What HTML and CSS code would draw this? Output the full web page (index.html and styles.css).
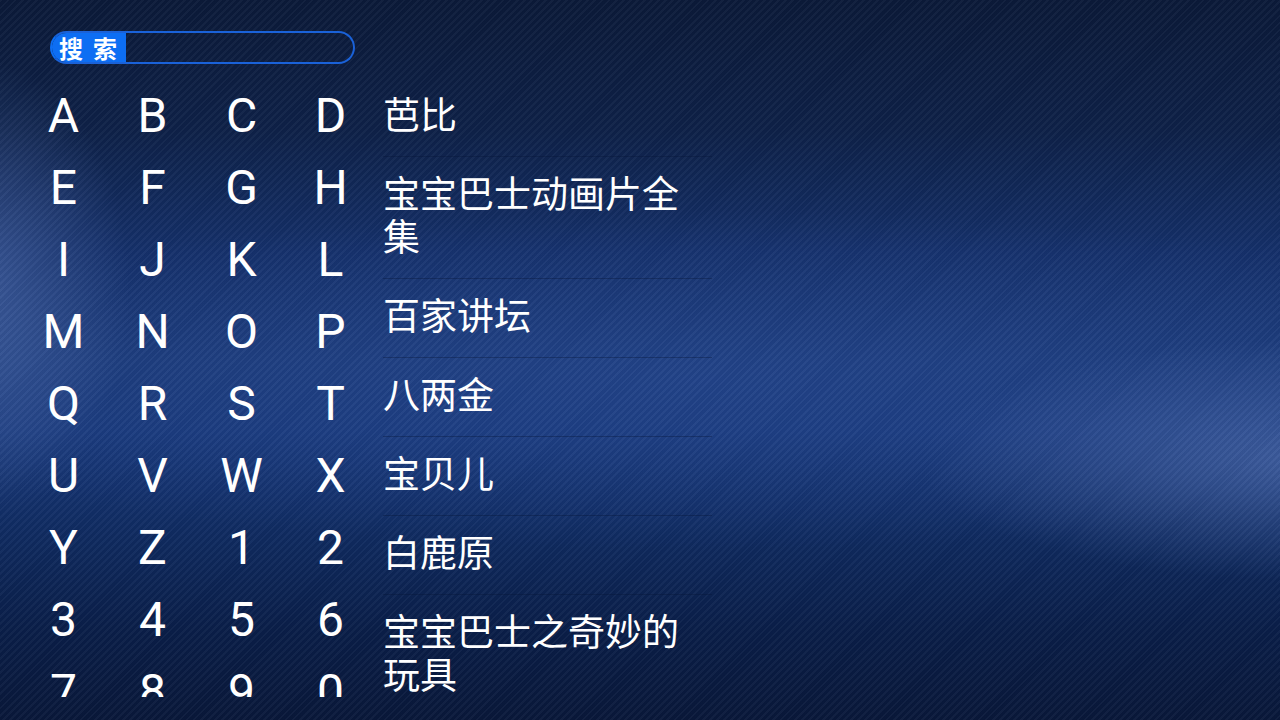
FILE: index.html
```html
<!DOCTYPE html>
<html lang="zh-CN">
<head>
<meta charset="utf-8">
<title>搜索</title>
<link rel="stylesheet" href="styles.css">
</head>
<body>
<div class="screen">
  <div class="search">
    <span class="search-label"><span>搜</span><span>索</span></span>
    <span class="search-field"></span>
  </div>
  <div class="main">
    <div class="keyboard">
      <span class="key">A</span><span class="key">B</span><span class="key">C</span><span class="key">D</span>
      <span class="key">E</span><span class="key">F</span><span class="key">G</span><span class="key">H</span>
      <span class="key">I</span><span class="key">J</span><span class="key">K</span><span class="key">L</span>
      <span class="key">M</span><span class="key">N</span><span class="key">O</span><span class="key">P</span>
      <span class="key">Q</span><span class="key">R</span><span class="key">S</span><span class="key">T</span>
      <span class="key">U</span><span class="key">V</span><span class="key">W</span><span class="key">X</span>
      <span class="key">Y</span><span class="key">Z</span><span class="key">1</span><span class="key">2</span>
      <span class="key">3</span><span class="key">4</span><span class="key">5</span><span class="key">6</span>
      <span class="key">7</span><span class="key">8</span><span class="key">9</span><span class="key">0</span>
    </div>
    <ul class="results">
      <li class="result">芭比</li>
      <li class="result">宝宝巴士动画片全集</li>
      <li class="result">百家讲坛</li>
      <li class="result">八两金</li>
      <li class="result">宝贝儿</li>
      <li class="result">白鹿原</li>
      <li class="result">宝宝巴士之奇妙的玩具</li>
    </ul>
  </div>
</div>
</body>
</html>
```

FILE: styles.css
```css
html, body {
  margin: 0;
  padding: 0;
}

body {
  width: 1280px;
  height: 720px;
  overflow: hidden;
  background: #0b1a38;
}

.screen {
  width: 1280px;
  height: 720px;
  box-sizing: border-box;
  padding-top: 31px;
  color: #ffffff;
  font-family: Roboto, "Noto Sans CJK SC", sans-serif;
  background:
    repeating-linear-gradient(135deg, rgba(255,255,255,0.035) 0px, rgba(255,255,255,0.035) 2px, rgba(0,0,0,0.03) 2px, rgba(0,0,0,0.03) 5px),
    radial-gradient(ellipse 380px 120px at 1300px 460px, rgba(80,110,175,0.65), rgba(80,110,175,0) 100%),
    radial-gradient(ellipse 150px 230px at -20px 290px, rgba(80,110,175,0.6), rgba(80,110,175,0) 100%),
    radial-gradient(ellipse 900px 170px at 700px 380px, rgba(40,75,150,0.5), rgba(40,75,150,0) 100%),
    linear-gradient(180deg, #0b1a39 0%, #0e2148 18%, #15306a 35%, #1c3b7a 50%, #19397b 60%, #0f2a5f 75%, #0a1e48 88%, #09183a 100%);
}

.search {
  display: flex;
  align-items: stretch;
  width: 305px;
  height: 33px;
  margin-left: 50px;
  box-sizing: border-box;
  border: 2px solid #1a62d9;
  border-left-color: #0d6ef3;
  border-radius: 17px;
  overflow: hidden;
}

.search-label {
  display: flex;
  align-items: center;
  gap: 10px;
  width: 74px;
  flex: none;
  box-sizing: border-box;
  padding-left: 7px;
  background: #0d6ef3;
  font-family: "Noto Sans CJK SC", sans-serif;
  font-weight: 700;
  font-size: 24px;
  line-height: 29px;
  white-space: nowrap;
}

.search-field {
  flex: 1;
}

.main {
  display: flex;
  align-items: flex-start;
  gap: 8px;
  height: 619px;
  margin-top: 14px;
  padding-left: 19px;
  overflow: hidden;
}

.keyboard {
  display: grid;
  grid-template-columns: repeat(4, 89px);
  grid-auto-rows: 72px;
  flex: none;
  padding-top: 2px;
}

.key {
  font-family: Roboto, sans-serif;
  font-size: 48px;
  line-height: 72px;
  text-align: center;
}

.results {
  list-style: none;
  margin: 0;
  padding: 0;
  width: 329px;
  flex: none;
}

.result {
  padding: 14px 0 21px 0;
  font-family: "Noto Sans CJK SC", sans-serif;
  font-size: 37px;
  line-height: 43px;
  border-bottom: 1px solid rgba(5, 20, 55, 0.35);
}

.result:last-child {
  border-bottom: none;
}
```
